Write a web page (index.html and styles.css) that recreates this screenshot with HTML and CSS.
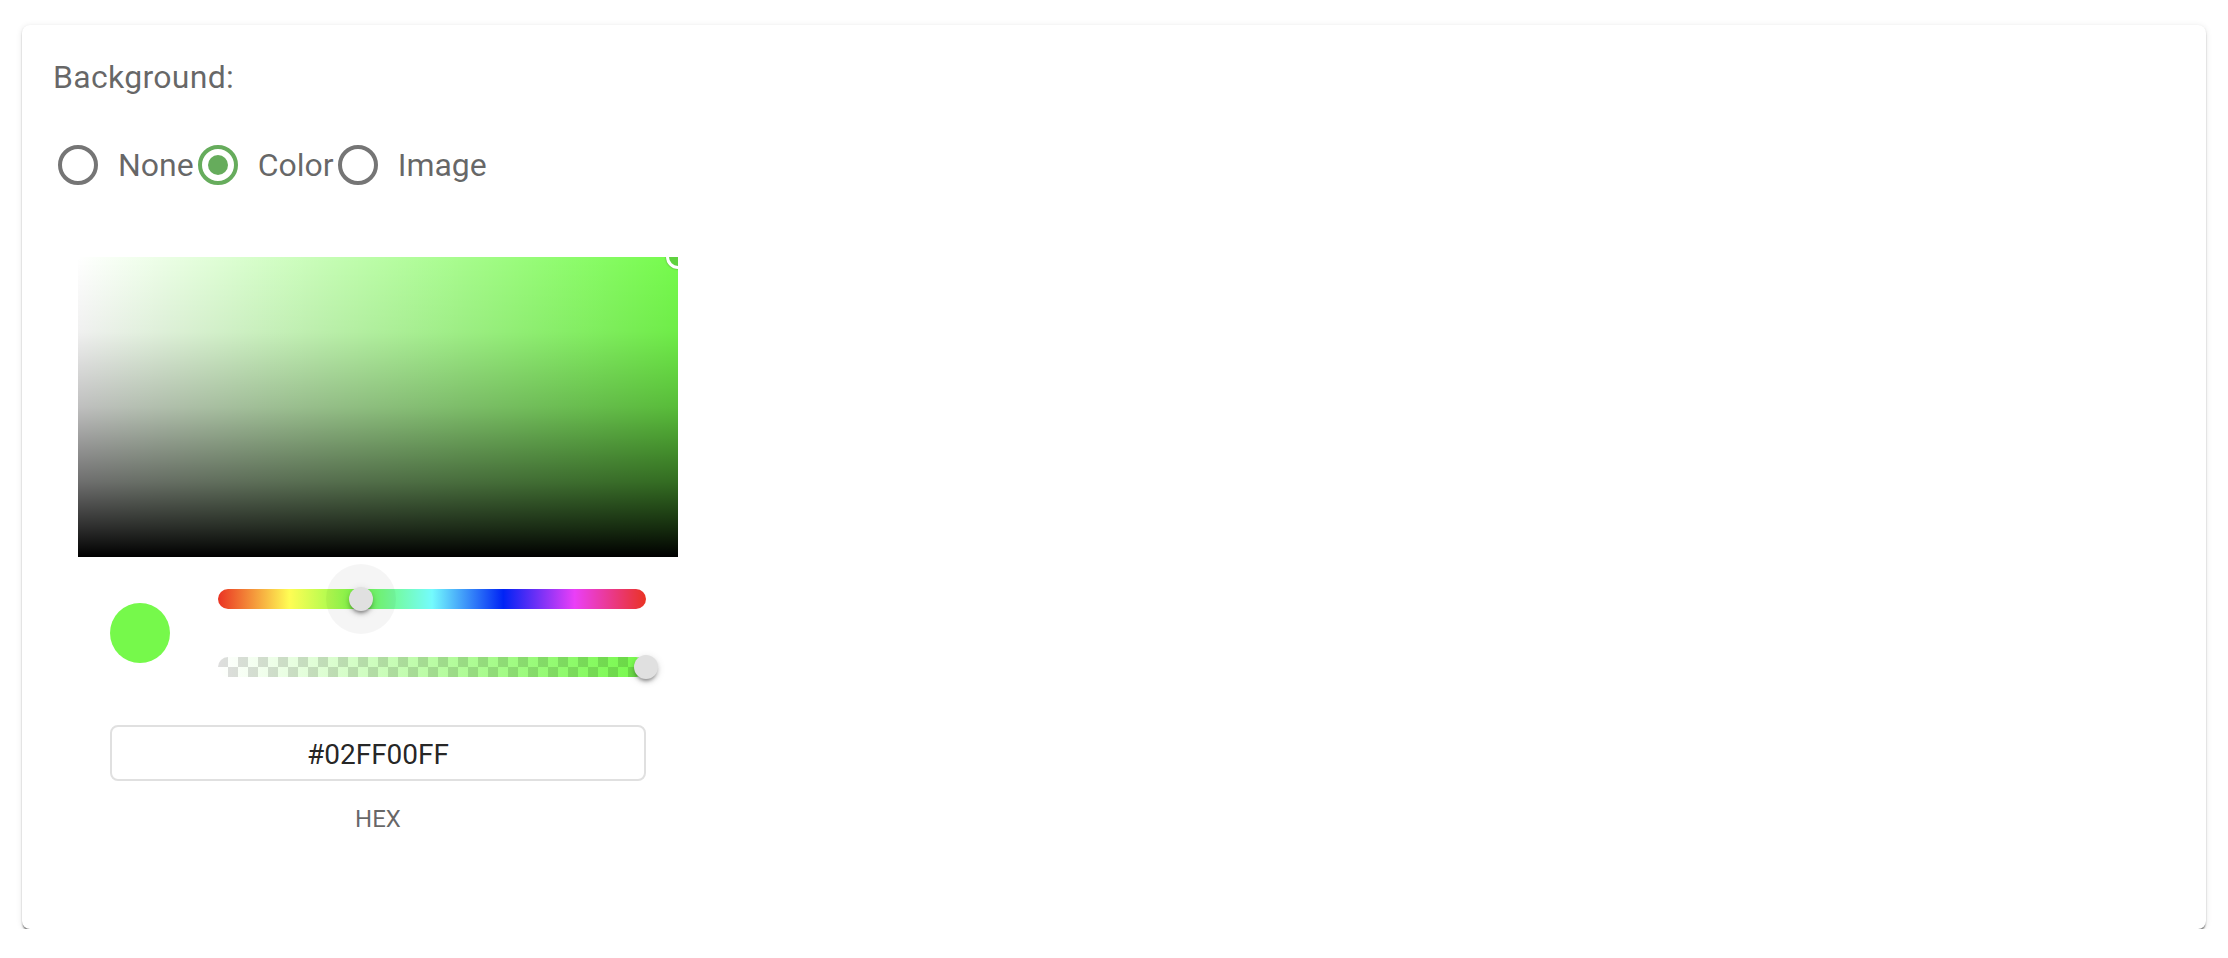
FILE: index.html
```html
<!DOCTYPE html>
<html lang="en">
<head>
<meta charset="utf-8">
<title>Background</title>
<link rel="stylesheet" href="styles.css">
</head>
<body>
<div class="page">
  <div class="card">
    <div class="label">Background:</div>
    <div class="radios">
      <div class="radio-item">
        <span class="radio"></span>
        <span class="radio-text">None</span>
      </div>
      <div class="radio-item">
        <span class="radio checked"><span class="dot"></span></span>
        <span class="radio-text">Color</span>
      </div>
      <div class="radio-item">
        <span class="radio"></span>
        <span class="radio-text">Image</span>
      </div>
    </div>
    <div class="picker">
      <div class="sat">
        <div class="sat-white"></div>
        <div class="sat-black"></div>
        <div class="sat-pointer"></div>
      </div>
      <div class="controls">
        <div class="swatch"></div>
        <div class="sliders">
          <div class="slider hue">
            <div class="halo" style="left: 33.33%"></div>
            <div class="thumb" style="left: 33.33%"></div>
          </div>
          <div class="slider alpha">
            <div class="alpha-checker"></div>
            <div class="thumb" style="left: 100%"></div>
          </div>
        </div>
      </div>
      <input class="hex-input" type="text" value="#02FF00FF">
      <div class="hex-label">HEX</div>
    </div>
  </div>
</div>
</body>
</html>
```

FILE: styles.css
```css
html, body {
  margin: 0;
  padding: 0;
  background: #ffffff;
}

body {
  font-family: Roboto, "Liberation Sans", Arial, sans-serif;
}

.page {
  padding: 25px 22px 0 22px;
}

.card {
  background: #ffffff;
  border-radius: 8px;
  box-shadow: 0 3px 2px -1px rgba(0, 0, 0, 0.5),
              0 1px 2px 0 rgba(0, 0, 0, 0.14),
              0 1px 6px 0 rgba(0, 0, 0, 0.1);
  padding: 28px 31px 92px 31px;
  height: 904px;
  box-sizing: border-box;
}

.label {
  font-size: 32px;
  line-height: 48px;
  color: rgba(0, 0, 0, 0.6);
  letter-spacing: 0.3px;
}

.radios {
  display: flex;
  align-items: center;
  height: 40px;
  margin-top: 44px;
  margin-left: 5px;
}

.radio-item {
  display: flex;
  align-items: center;
  margin-right: 4px;
}

.radio {
  width: 40px;
  height: 40px;
  box-sizing: border-box;
  border: 4px solid #757575;
  border-radius: 50%;
  display: flex;
  align-items: center;
  justify-content: center;
}

.radio.checked {
  border-color: #66ac5c;
}

.dot {
  width: 20px;
  height: 20px;
  border-radius: 50%;
  background: #66ac5c;
}

.radio-text {
  margin-left: 20px;
  font-size: 32px;
  line-height: 48px;
  color: rgba(0, 0, 0, 0.6);
}

.picker {
  width: 600px;
  margin-left: 25px;
  margin-top: 72px;
}

.sat {
  position: relative;
  width: 600px;
  height: 300px;
  overflow: hidden;
  background: #75fb4c;
}

.sat-white {
  position: absolute;
  inset: 0;
  background: linear-gradient(to right, #ffffff, rgba(255, 255, 255, 0));
}

.sat-black {
  position: absolute;
  inset: 0;
  background: linear-gradient(to bottom,
    rgba(0, 0, 0, 0) 0%,
    rgba(0, 0, 0, 0.06) 25%,
    rgba(0, 0, 0, 0.25) 50%,
    rgba(0, 0, 0, 0.57) 75%,
    rgba(0, 0, 0, 0.82) 90%,
    rgba(0, 0, 0, 1) 100%);
}

.sat-pointer {
  position: absolute;
  right: -12px;
  top: -12px;
  width: 24px;
  height: 24px;
  box-sizing: border-box;
  border-radius: 50%;
  border: 3px solid #ffffff;
  background: #5fd23f;
  box-shadow: 0 0 2px rgba(0, 0, 0, 0.4);
}

.controls {
  display: flex;
  align-items: center;
  padding: 0 32px;
  margin-top: 32px;
}

.swatch {
  width: 60px;
  height: 60px;
  border-radius: 50%;
  background: #76f94b;
  flex: none;
  margin-right: 48px;
}

.sliders {
  flex: 1;
  display: flex;
  flex-direction: column;
  gap: 48px;
}

.slider {
  position: relative;
  height: 20px;
  border-radius: 10px;
}

.hue {
  background: linear-gradient(to right,
    #ea3323 0%,
    #fffd54 16.66%,
    #75fb4c 33.33%,
    #74fbfd 50%,
    #0023f5 66.66%,
    #ea3ff7 83.33%,
    #ea3323 100%);
}

.alpha {
  background: linear-gradient(to right, #ffffff, #76f94b);
}

.alpha-checker {
  position: absolute;
  inset: 0;
  border-radius: 10px;
  background-image: conic-gradient(rgba(0, 0, 0, 0) 25%, rgba(0, 0, 0, 0.13) 0 50%, rgba(0, 0, 0, 0) 0 75%, rgba(0, 0, 0, 0.13) 0);
  background-size: 20px 20px;
}

.halo {
  position: absolute;
  top: 50%;
  width: 70px;
  height: 70px;
  margin-left: -35px;
  margin-top: -35px;
  border-radius: 50%;
  background: rgba(0, 0, 0, 0.04);
}

.thumb {
  position: absolute;
  top: 50%;
  width: 24px;
  height: 24px;
  margin-left: -12px;
  margin-top: -12px;
  border-radius: 50%;
  background: #e0e0e0;
  box-shadow: 0 4px 3px -2px rgba(0, 0, 0, 0.25),
              0 3px 4px 0 rgba(0, 0, 0, 0.16),
              0 2px 8px 0 rgba(0, 0, 0, 0.12);
}

.hex-input {
  display: block;
  box-sizing: border-box;
  width: 536px;
  height: 56px;
  margin: 48px 32px 0 32px;
  padding: 2px 0 0 0;
  border: 2px solid #e0e0e0;
  border-radius: 8px;
  background: #ffffff;
  font-family: Roboto, "Liberation Sans", Arial, sans-serif;
  font-size: 28px;
  color: rgba(0, 0, 0, 0.87);
  text-align: center;
  outline: none;
}

.hex-label {
  margin-top: 20px;
  text-align: center;
  font-size: 24px;
  line-height: 36px;
  color: rgba(0, 0, 0, 0.6);
}
```
